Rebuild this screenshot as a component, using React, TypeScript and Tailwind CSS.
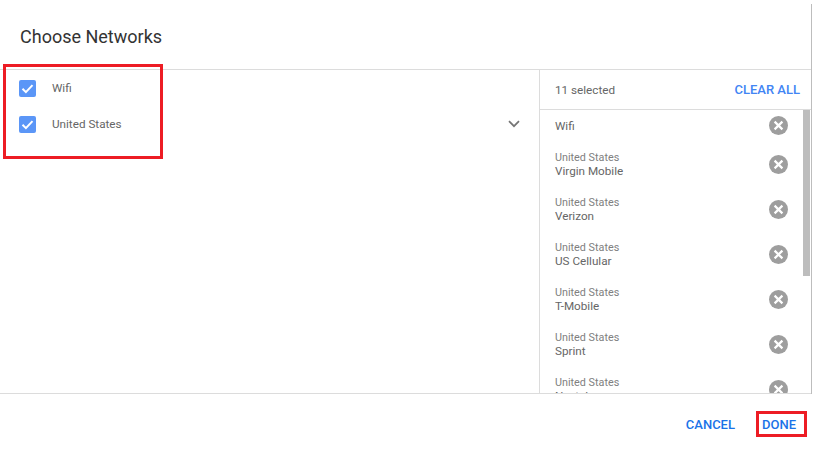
import React from "react";

const networks = ["Virgin Mobile", "Verizon", "US Cellular", "T-Mobile", "Sprint", "Nextel"];

const RemoveIcon = ({ className = "" }: { className?: string }) => (
  <svg width="19" height="19" viewBox="0 0 19 19" className={"shrink-0 " + className}>
    <circle cx="9.5" cy="9.5" r="9.5" fill="#9e9e9e" />
    <path d="M5.6 5.6l7.8 7.8M13.4 5.6l-7.8 7.8" stroke="#fff" strokeWidth="2.2" fill="none" />
  </svg>
);

const Check = () => (
  <div className="w-[17px] h-[17px] rounded-[2px] bg-[#5b96f7] flex items-center justify-center">
    <svg width="13" height="13" viewBox="0 0 13 13">
      <path d="M1.5 6.8l3.4 3.3 6.6-7" stroke="#fff" strokeWidth="2" fill="none" />
    </svg>
  </div>
);

const NetworkRow = ({ label, expandable }: { label: string; expandable?: boolean }) => (
  <div className="h-9 flex items-center pl-[19px] pr-[18px]">
    <Check />
    <span className="ml-4 mt-[2px] text-[11.7px] text-[#666]">{label}</span>
    {expandable && (
      <svg width="12" height="8" viewBox="0 0 12 8" className="ml-auto -translate-x-px">
        <path d="M1 1.2l5 5 5-5" stroke="#757575" strokeWidth="1.7" fill="none" />
      </svg>
    )}
  </div>
);

export default function App() {
  return (
    <div className="relative w-[819px] h-[465px] bg-white overflow-hidden font-['Roboto',sans-serif]">
      <div className="w-[811px] h-full flex flex-col">
        <div className="h-[70px] shrink-0 border-b border-[#dcdcdc] pl-5 pt-[25px]">
          <h1 className="text-lg leading-6 font-normal text-[#333]">Choose Networks</h1>
        </div>

        <div className="h-[323px] shrink-0 flex">
          <div className="w-[539px]">
            <NetworkRow label="Wifi" />
            <NetworkRow label="United States" expandable />
          </div>

          <div className="relative flex-1 border-l border-[#dcdcdc] flex flex-col overflow-hidden">
            <div className="h-10 shrink-0 border-b border-[#dcdcdc] pl-[15px] pr-[11px] flex items-center justify-between">
              <span className="mt-[2px] text-[11.7px] text-[#666]">11 selected</span>
              <span className="text-[13px] font-medium text-[#4285f4]">CLEAR ALL</span>
            </div>
            <div className="pl-[15px] pr-[23px]">
              <div className="h-[31px] flex items-center justify-between">
                <span className="mt-[2px] text-[11.7px] text-[#666]">Wifi</span>
                <RemoveIcon />
              </div>
              {networks.map((name) => (
                <div key={name} className="h-[45px] flex items-center justify-between">
                  <div className="flex flex-col pt-[2px]">
                    <span className="text-[10.8px] leading-[13px] text-[#808080]">United States</span>
                    <span className="text-[11.7px] leading-[14px] text-[#666]">{name}</span>
                  </div>
                  <RemoveIcon className="mt-[2px]" />
                </div>
              ))}
            </div>
            <div className="absolute right-[1px] top-10 w-[7px] h-[166px] bg-[#bdbdbd]" />
          </div>
        </div>

        <div className="flex-1 border-t border-[#dcdcdc] flex items-start justify-end gap-[27px] pt-[23px] pr-[15px] bg-white">
          <span className="text-[13px] leading-4 font-medium text-[#1a73e8]">CANCEL</span>
          <span className="text-[13px] leading-4 font-medium text-[#1a73e8]">DONE</span>
        </div>
      </div>

      <div className="absolute left-[811px] top-[4px] w-px h-[390px] bg-[#bdbdbd]" />
      <div className="absolute left-[3px] top-[64px] w-[160px] h-[95px] border-[3px] border-[#ed1c24]" />
      <div className="absolute left-[756px] top-[411px] w-[51px] h-[26px] border-[3px] border-[#ed1c24]" />
    </div>
  );
}
